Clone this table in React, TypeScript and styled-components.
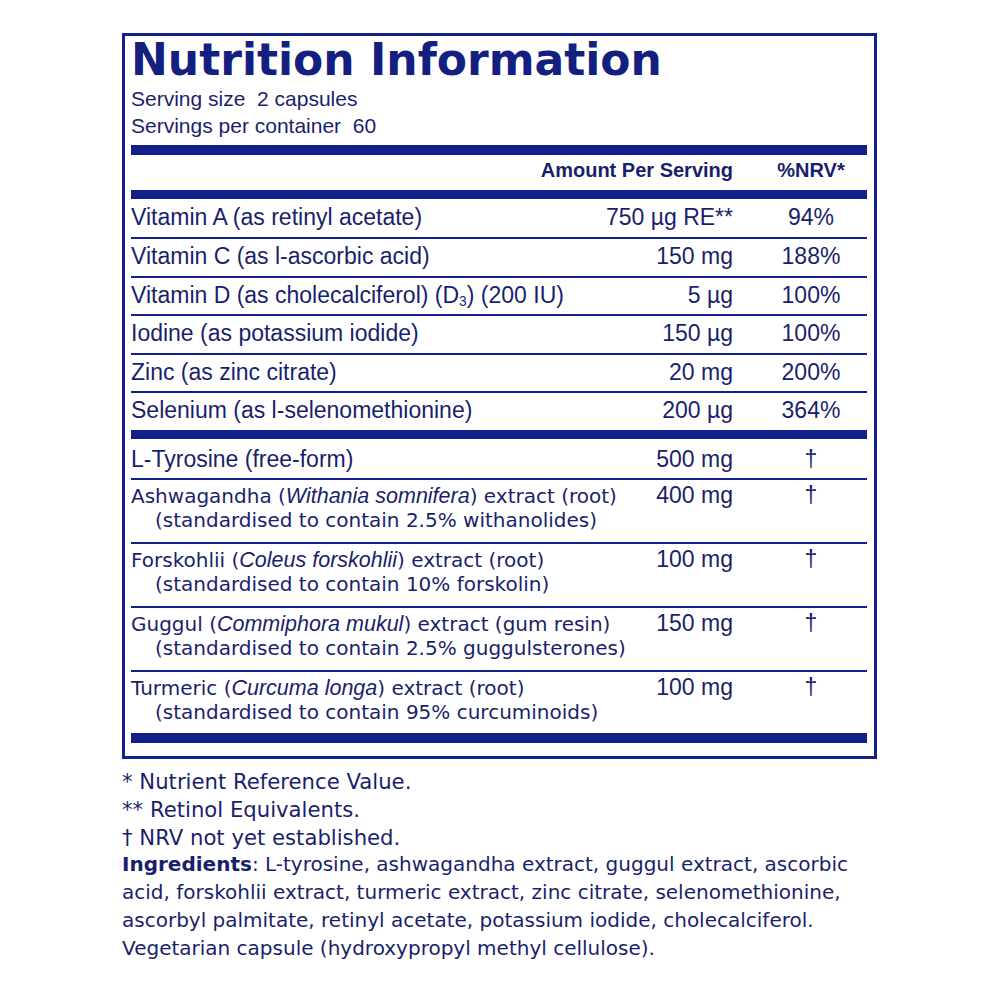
import React from "react";
import styled, { createGlobalStyle } from "styled-components";

const NAVY = "#13208a";
const INK = "#1a1f6b";

const GlobalStyle = createGlobalStyle`
  html, body { margin: 0; padding: 0; background: #ffffff; }
  body { font-family: "Liberation Sans", Arial, sans-serif; color: ${INK}; }
`;

const Page = styled.div`
  width: 1000px;
  height: 1000px;
  box-sizing: border-box;
  padding: 33px 0 0 122px;
  background: #ffffff;
`;

const Panel = styled.section`
  width: 755px;
  box-sizing: border-box;
  border: 3px solid ${NAVY};
  padding: 2px 7px 13px 6px;
`;

const Title = styled.h1`
  margin: 0;
  font-family: "DejaVu Sans", sans-serif;
  font-weight: 700;
  font-size: 44px;
  line-height: 44px;
  color: #14207f;
  white-space: nowrap;
`;

const ServingInfo = styled.div`
  margin-top: 3px;
  font-size: 21px;
  line-height: 27px;
  white-space: pre;
`;

const Bar = styled.div<{ $h: number; $top?: number }>`
  height: ${(p) => p.$h}px;
  margin-top: ${(p) => p.$top ?? 0}px;
  background: ${NAVY};
`;

const Row = styled.div<{ $pt: number; $pb: number; $rule?: boolean }>`
  display: grid;
  grid-template-columns: 1fr auto 112px;
  column-gap: 22px;
  align-items: baseline;
  padding: ${(p) => p.$pt}px 0 ${(p) => p.$pb}px;
  border-top: ${(p) => (p.$rule ? `2px solid ${NAVY}` : "none")};
`;

const HeadCell = styled.div<{ $center?: boolean }>`
  font-size: 20px;
  line-height: 22px;
  font-weight: 700;
  text-align: ${(p) => (p.$center ? "center" : "right")};
  white-space: nowrap;
`;

const Name = styled.div`
  font-size: 23px;
  line-height: 26px;
  white-space: nowrap;
`;

const Amount = styled.div<{ $tight?: boolean }>`
  font-size: 23px;
  line-height: ${(p) => (p.$tight ? 24 : 26)}px;
  text-align: right;
  white-space: nowrap;
`;

const Nrv = styled.div<{ $tight?: boolean }>`
  font-size: 23px;
  line-height: ${(p) => (p.$tight ? 24 : 26)}px;
  text-align: center;
  white-space: nowrap;
`;

const Botanical = styled.div`
  font-family: "DejaVu Sans", sans-serif;
  font-size: 20px;
  line-height: 24px;
  white-space: nowrap;
`;

const Detail = styled.span`
  display: block;
  padding-left: 24px;
`;

const Latin = styled.i`
  font-family: "Liberation Sans", Arial, sans-serif;
  font-style: italic;
  font-size: 21.5px;
`;

const Sub = styled.sub`
  font-size: 0.6em;
  line-height: 0;
  vertical-align: -0.25em;
`;

const Footnotes = styled.div`
  margin-top: 9px;
  font-family: "DejaVu Sans", sans-serif;
  font-size: 21.2px;
  line-height: 27.8px;
  white-space: nowrap;
`;

const Ingredients = styled.p`
  margin: 0;
  font-size: 20px;
  line-height: 27.8px;
`;

const Strong = styled.b`
  font-weight: 700;
`;

type Nutrient = { name: React.ReactNode; amount: string; nrv: string };

const nutrients: Nutrient[] = [
  { name: "Vitamin A (as retinyl acetate)", amount: "750 µg RE**", nrv: "94%" },
  { name: "Vitamin C (as l-ascorbic acid)", amount: "150 mg", nrv: "188%" },
  {
    name: (
      <>
        Vitamin D (as cholecalciferol) (D<Sub>3</Sub>) (200 IU)
      </>
    ),
    amount: "5 µg",
    nrv: "100%",
  },
  { name: "Iodine (as potassium iodide)", amount: "150 µg", nrv: "100%" },
  { name: "Zinc (as zinc citrate)", amount: "20 mg", nrv: "200%" },
  { name: "Selenium (as l-selenomethionine)", amount: "200 µg", nrv: "364%" },
];

type Herb = { common: string; latin: string; part: string; detail: string; amount: string };

const herbs: Herb[] = [
  {
    common: "Ashwagandha",
    latin: "Withania somnifera",
    part: "extract (root)",
    detail: "(standardised to contain 2.5% withanolides)",
    amount: "400 mg",
  },
  {
    common: "Forskohlii",
    latin: "Coleus forskohlii",
    part: "extract (root)",
    detail: "(standardised to contain 10% forskolin)",
    amount: "100 mg",
  },
  {
    common: "Guggul",
    latin: "Commiphora mukul",
    part: "extract (gum resin)",
    detail: "(standardised to contain 2.5% guggulsterones)",
    amount: "150 mg",
  },
  {
    common: "Turmeric",
    latin: "Curcuma longa",
    part: "extract (root)",
    detail: "(standardised to contain 95% curcuminoids)",
    amount: "100 mg",
  },
];

const herbPadBottom = [10, 10, 10, 9];

export default function App() {
  return (
    <Page>
      <GlobalStyle />
      <Panel>
        <Title>Nutrition Information</Title>
        <ServingInfo>
          {"Serving size  2 capsules"}
          <br />
          {"Servings per container  60"}
        </ServingInfo>
        <Bar $h={10} $top={6} />
        <Row $pt={4} $pb={9}>
          <span />
          <HeadCell>Amount Per Serving</HeadCell>
          <HeadCell $center>%NRV*</HeadCell>
        </Row>
        <Bar $h={9} />
        {nutrients.map((n, i) => (
          <Row key={i} $rule={i > 0} $pt={i === 0 ? 5 : 4} $pb={i === 0 ? 7 : 6.6}>
            <Name>{n.name}</Name>
            <Amount>{n.amount}</Amount>
            <Nrv>{n.nrv}</Nrv>
          </Row>
        ))}
        <Bar $h={9} />
        <Row $pt={7} $pb={6}>
          <Name>L-Tyrosine (free-form)</Name>
          <Amount>500 mg</Amount>
          <Nrv>†</Nrv>
        </Row>
        {herbs.map((h, i) => (
          <Row key={h.common} $rule $pt={3} $pb={herbPadBottom[i]}>
            <Botanical>
              {h.common} (<Latin>{h.latin}</Latin>) {h.part}
              <Detail>{h.detail}</Detail>
            </Botanical>
            <Amount $tight>{h.amount}</Amount>
            <Nrv $tight>†</Nrv>
          </Row>
        ))}
        <Bar $h={10} />
      </Panel>
      <Footnotes>
        * Nutrient Reference Value.
        <br />
        ** Retinol Equivalents.
        <br />
        † NRV not yet established.
        <Ingredients>
          <Strong>Ingredients</Strong>: L-tyrosine, ashwagandha extract, guggul extract, ascorbic
          <br />
          acid, forskohlii extract, turmeric extract, zinc citrate, selenomethionine,
          <br />
          ascorbyl palmitate, retinyl acetate, potassium iodide, cholecalciferol.
          <br />
          Vegetarian capsule (hydroxypropyl methyl cellulose).
        </Ingredients>
      </Footnotes>
    </Page>
  );
}
